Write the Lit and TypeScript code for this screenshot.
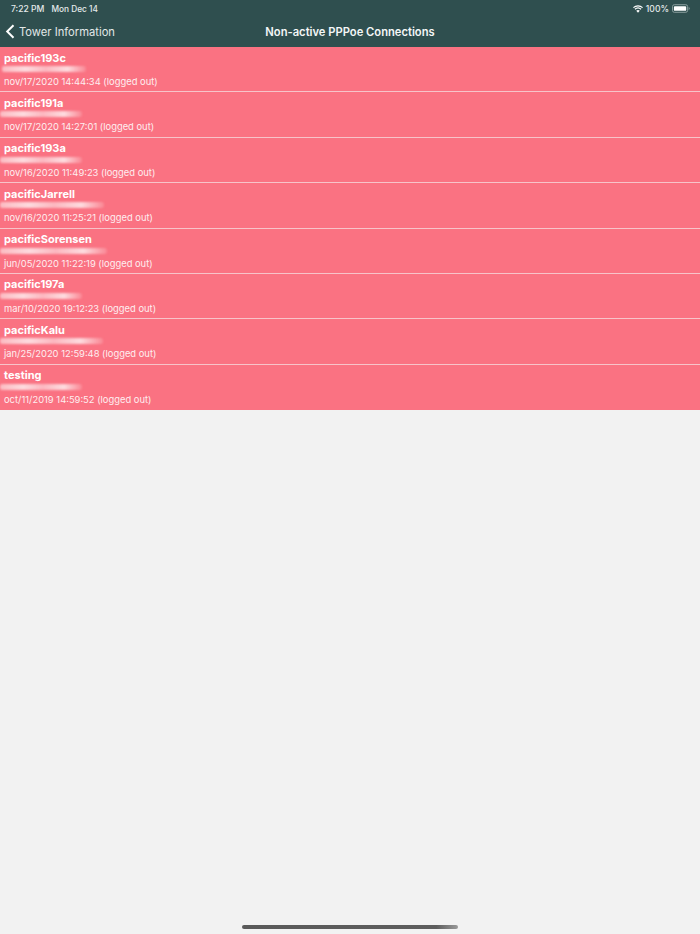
import { LitElement, html, css, svg } from "lit";
import { customElement } from "lit/decorators.js";

const rows = [
  { n: "pacific193c", t: "nov/17/2020 14:44:34 (logged out)", w: 84, x: 2 },
  { n: "pacific191a", t: "nov/17/2020 14:27:01 (logged out)", w: 82, x: 0 },
  { n: "pacific193a", t: "nov/16/2020 11:49:23 (logged out)", w: 82, x: 0 },
  { n: "pacificJarrell", t: "nov/16/2020 11:25:21 (logged out)", w: 104, x: 0 },
  { n: "pacificSorensen", t: "jun/05/2020 11:22:19 (logged out)", w: 107, x: 0 },
  { n: "pacific197a", t: "mar/10/2020 19:12:23 (logged out)", w: 82, x: 0 },
  { n: "pacificKalu", t: "jan/25/2020 12:59:48 (logged out)", w: 103, x: 0 },
  { n: "testing", t: "oct/11/2019 14:59:52 (logged out)", w: 82, x: 0 },
];

@customElement("app-root")
export class AppRoot extends LitElement {
  static styles = css`
    :host {
      display: flex;
      flex-direction: column;
      width: 700px;
      height: 934px;
      background: #f2f2f2;
      font-family: Inter, "Liberation Sans", sans-serif;
      color: #fff;
      overflow: hidden;
      position: relative;
    }
    .top {
      background: #2f4f4f;
      height: 47px;
      flex: none;
      display: flex;
      flex-direction: column;
    }
    .status {
      height: 17px;
      flex: none;
      display: flex;
      align-items: center;
      padding: 0 10px 0 11px;
      font-size: 8.6px;
      font-weight: 500;
      color: #e4eaea;
    }
    .status .date { margin-left: 7px; font-size: 8.3px; }
    .spacer { flex: 1; }
    .wifi { margin-right: 3px; }
    .pct { margin-right: 3px; }
    .nav {
      flex: 1;
      display: grid;
      grid-template-columns: 1fr auto 1fr;
      align-items: center;
      padding-bottom: 1px;
    }
    .back {
      display: flex;
      align-items: center;
      padding-left: 5px;
      font-size: 11.2px;
      color: #e2e8e8;
    }
    .back svg { margin-right: 4px; }
    .title {
      font-size: 11.2px;
      font-weight: 600;
      color: #f4f7f7;
    }
    .list { flex: none; }
    .row {
      height: 45.375px;
      box-sizing: border-box;
      background: #fa7282;
      border-bottom: 1px solid #f7c3c9;
      padding: 3.5px 0 0 4px;
      position: relative;
      overflow: hidden;
    }
    .row:last-child { border-bottom: none; }
    .name {
      font-size: 11px;
      font-weight: 700;
      line-height: 14px;
      color: #fff;
    }
    .smear {
      position: absolute;
      left: 0;
      top: 19px;
      height: 6px;
      border-radius: 2px;
      background: linear-gradient(90deg, rgba(252, 205, 210, 0.8) 0%, rgba(253, 224, 227, 0.95) 28%, rgba(252, 195, 202, 0.85) 52%, rgba(253, 225, 228, 0.95) 78%, rgba(253, 217, 220, 0.2) 100%);
      filter: blur(1.3px);
    }
    .time {
      position: absolute;
      left: 4px;
      top: 28px;
      font-size: 9.4px;
      line-height: 13px;
      color: #feeef0;
      white-space: nowrap;
    }
    .home {
      position: absolute;
      left: 242px;
      top: 925px;
      width: 216px;
      height: 4px;
      border-radius: 2px;
      background: linear-gradient(90deg, #5a5a5a 0%, #5e5e5e 90%, #9a9a9a 100%);
    }
  `;

  render() {
    return html`
      <div class="top">
        <div class="status">
          <span>7:22 PM</span>
          <span class="date">Mon Dec 14</span>
          <span class="spacer"></span>
          <svg class="wifi" width="10" height="8" viewBox="0 0 11 8">
            ${svg`<path d="M5.500 8 3.600 5.900a2.800 2.800 0 0 1 3.800 0Z" fill="#fff"/>
            <path d="M2.600 4.800 1.700 3.800a5.600 5.600 0 0 1 7.600 0l-.9 1a4.300 4.300 0 0 0-5.800 0Z" fill="#fff"/>
            <path d="M.9 3 0 2a8.200 8.200 0 0 1 11 0l-.9 1a6.900 6.900 0 0 0-9.200 0Z" fill="#fff"/>`}
          </svg>
          <span class="pct">100%</span>
          <svg width="18" height="9" viewBox="0 0 19 9">
            ${svg`<rect x=".5" y=".5" width="16" height="8" rx="2" fill="none" stroke="#8fa3a3"/>
            <rect x="2" y="2" width="13" height="5" rx="1" fill="#fff"/>
            <path d="M17.600 3v3c.7-.2 1-.8 1-1.500s-.3-1.300-1-1.500Z" fill="#8fa3a3"/>`}
          </svg>
        </div>
        <div class="nav">
          <div class="back">
            <svg width="10" height="15" viewBox="0 0 10 15">
              ${svg`<path d="M8.500 1.200 2.200 7.500l6.300 6.300" fill="none" stroke="#fff" stroke-width="2"/>`}
            </svg>
            <span>Tower Information</span>
          </div>
          <div class="title">Non-active PPPoe Connections</div>
          <div></div>
        </div>
      </div>
      <div class="list">
        ${rows.map(
          (r) => html`
            <div class="row">
              <div class="name">${r.n}</div>
              <div class="smear" style="width:${r.w}px;left:${r.x}px"></div>
              <div class="time">${r.t}</div>
            </div>
          `
        )}
      </div>
      <div class="home"></div>
    `;
  }
}
